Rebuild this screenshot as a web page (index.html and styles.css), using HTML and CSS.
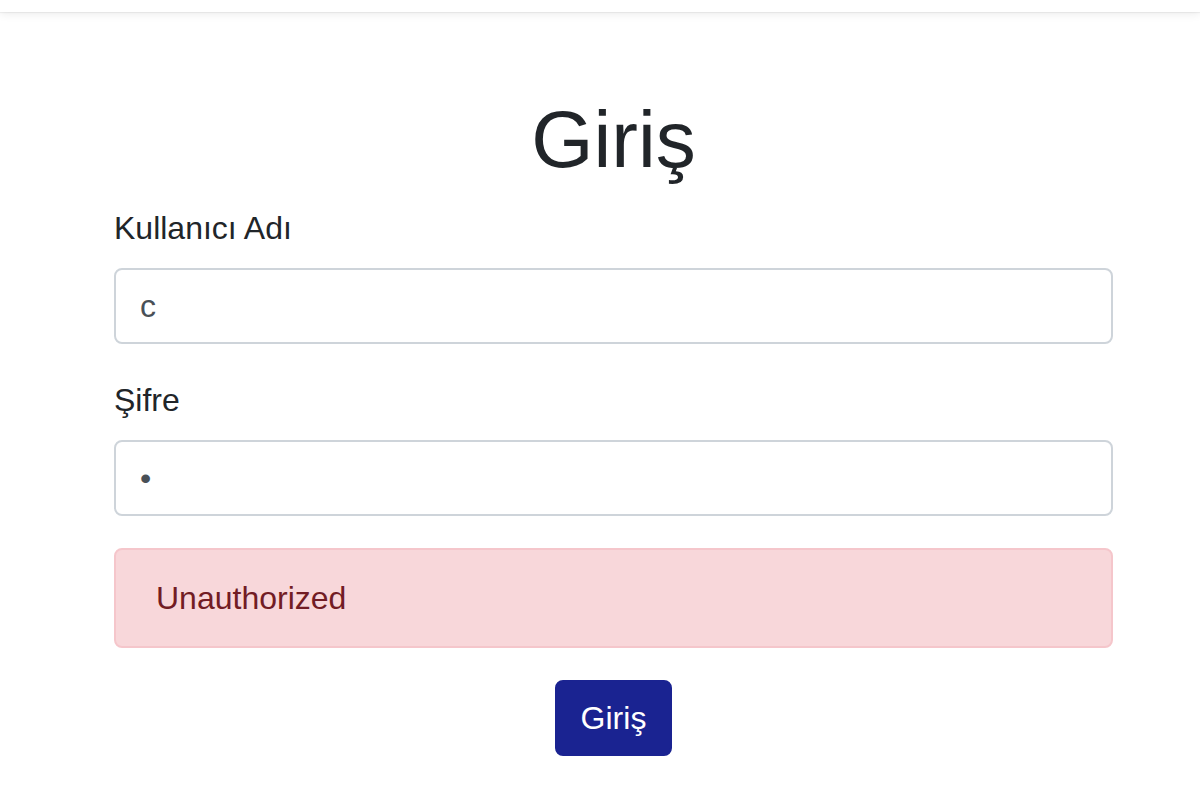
FILE: index.html
```html
<!DOCTYPE html>
<html lang="tr">
<head>
<meta charset="utf-8">
<title>Giriş</title>
<link rel="stylesheet" href="styles.css">
</head>
<body>
<nav class="topbar"></nav>
<main class="page">
  <h1 class="title">Giriş</h1>
  <form class="login-form">
    <div class="form-group">
      <label class="form-label" for="username">Kullanıcı Adı</label>
      <input class="form-input" id="username" type="text" value="c">
    </div>
    <div class="form-group">
      <label class="form-label" for="password">Şifre</label>
      <input class="form-input" id="password" type="password" value="c">
    </div>
    <div class="alert-error">Unauthorized</div>
    <div class="actions">
      <button class="btn-submit" type="button">Giriş</button>
    </div>
  </form>
</main>
</body>
</html>
```

FILE: styles.css
```css
* { box-sizing: border-box; }
html, body {
  margin: 0;
  padding: 0;
  background: #fff;
}
body {
  font-family: "Liberation Sans", Arial, sans-serif;
  font-size: 32px;
  line-height: 1.5;
  color: #212529;
}
.topbar {
  height: 12px;
  background: #fff;
  box-shadow: 0 2px 10px rgba(0, 0, 0, 0.08), 0 1px 1px rgba(0, 0, 0, 0.05);
  position: relative;
}
.page {
  margin: 0 87px 0 114px;
  padding-top: 80px;
}
.title {
  margin: 0 0 16px;
  font-size: 80px;
  line-height: 1.2;
  font-weight: 400;
  text-align: center;
  color: #212529;
}
.login-form {
  margin: 0;
}
.form-group {
  margin-bottom: 32px;
}
.form-label {
  display: inline-block;
  margin-bottom: 16px;
}
.form-input {
  display: block;
  width: 100%;
  height: 76px;
  padding: 12px 24px;
  font-family: inherit;
  font-size: 32px;
  line-height: 1.5;
  color: #495057;
  background: #fff;
  border: 2px solid #ced4da;
  border-radius: 8px;
  outline: none;
}
.alert-error {
  padding: 24px 40px;
  margin-bottom: 32px;
  color: #721c24;
  background: #f8d7da;
  border: 2px solid #f5c6cb;
  border-radius: 8px;
}
.actions {
  display: flex;
  justify-content: center;
}
.btn-submit {
  font-family: inherit;
  font-size: 32px;
  line-height: 1.5;
  padding: 12px 24px;
  color: #fff;
  background: #1a2391;
  border: 2px solid #1a2391;
  border-radius: 8px;
  cursor: pointer;
}
```
